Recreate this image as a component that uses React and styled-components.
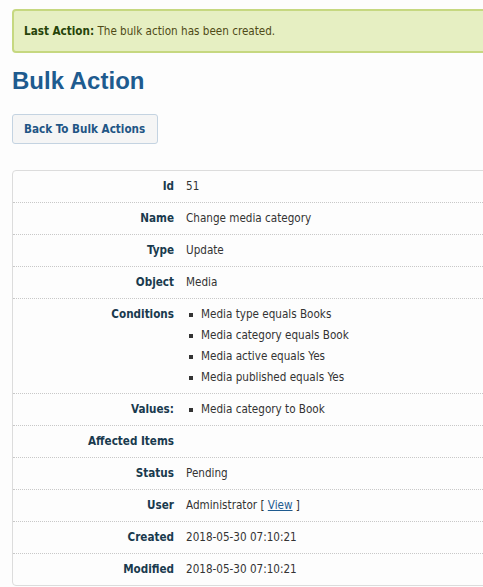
import React from "react";
import styled, { createGlobalStyle } from "styled-components";

const GlobalStyle = createGlobalStyle`
  html, body {
    margin: 0;
    padding: 0;
    background: #fdfdfd;
    overflow: hidden;
  }
  body {
    font-family: "DejaVu Sans Condensed", "DejaVu Sans", sans-serif;
    font-stretch: condensed;
    font-size: 11.6px;
    color: #333;
  }
`;

const Page = styled.div`
  width: 620px;
  padding: 9px 12px 0;
`;

const Notice = styled.div`
  background: #e6efc2;
  border: 2px solid #c6d880;
  border-radius: 4px;
  color: #4f4a16;
  padding: 12px 10px;
  line-height: 16px;
  b { color: #264409; }
`;

const Title = styled.h1`
  margin: 14px 0 0;
  font-family: "Liberation Sans", Arial, sans-serif;
  font-stretch: normal;
  font-size: 24px;
  line-height: 28px;
  font-weight: bold;
  color: #1e5b8f;
`;

const BackButton = styled.button`
  margin-top: 19px;
  display: block;
  font-family: inherit;
  font-stretch: condensed;
  font-size: 11.6px;
  font-weight: bold;
  line-height: 15px;
  white-space: nowrap;
  color: #1f5585;
  background: #f5f5f5;
  border: 1px solid #c4d3e1;
  border-radius: 3px;
  padding: 7px 12px 6px 11px;
  cursor: pointer;
`;

const Panel = styled.div`
  margin-top: 26px;
  border: 1px solid #dcdcdc;
  border-radius: 4px;
  background: #fdfdfd;
`;

const Row = styled.div`
  display: grid;
  grid-template-columns: 161px 1fr;
  column-gap: 12px;
  padding: 8px 0;
  line-height: 15px;
  & + & { border-top: 1px dotted #c8c8c8; }
`;

const Label = styled.div`
  text-align: right;
  font-weight: bold;
  color: #193a4e;
`;

const Value = styled.div`
  color: #333;
`;

const List = styled.ul`
  margin: 0;
  padding: 0;
  list-style: none;
`;

const Item = styled.li`
  position: relative;
  padding-left: 15px;
  & + & { margin-top: 6px; }
  &::before {
    content: "";
    position: absolute;
    left: 3px;
    top: 6px;
    width: 4px;
    height: 4px;
    background: #333;
  }
`;

const ViewLink = styled.a`
  color: #1e5b8f;
  text-decoration: underline;
`;

const rows = [
  ["Id", "51"],
  ["Name", "Change media category"],
  ["Type", "Update"],
  ["Object", "Media"],
];

export default function App() {
  return (
    <>
      <GlobalStyle />
      <Page>
        <Notice>
          <b>Last Action:</b> The bulk action has been created.
        </Notice>
        <Title>Bulk Action</Title>
        <BackButton>Back To Bulk Actions</BackButton>
        <Panel>
          {rows.map(([k, v]) => (
            <Row key={k}>
              <Label>{k}</Label>
              <Value>{v}</Value>
            </Row>
          ))}
          <Row>
            <Label>Conditions</Label>
            <List>
              <Item>Media type equals Books</Item>
              <Item>Media category equals Book</Item>
              <Item>Media active equals Yes</Item>
              <Item>Media published equals Yes</Item>
            </List>
          </Row>
          <Row>
            <Label>Values:</Label>
            <List>
              <Item>Media category to Book</Item>
            </List>
          </Row>
          <Row>
            <Label>Affected Items</Label>
            <Value />
          </Row>
          <Row>
            <Label>Status</Label>
            <Value>Pending</Value>
          </Row>
          <Row>
            <Label>User</Label>
            <Value>
              Administrator [ <ViewLink href="#">View</ViewLink> ]
            </Value>
          </Row>
          <Row>
            <Label>Created</Label>
            <Value>2018-05-30 07:10:21</Value>
          </Row>
          <Row>
            <Label>Modified</Label>
            <Value>2018-05-30 07:10:21</Value>
          </Row>
        </Panel>
      </Page>
    </>
  );
}
